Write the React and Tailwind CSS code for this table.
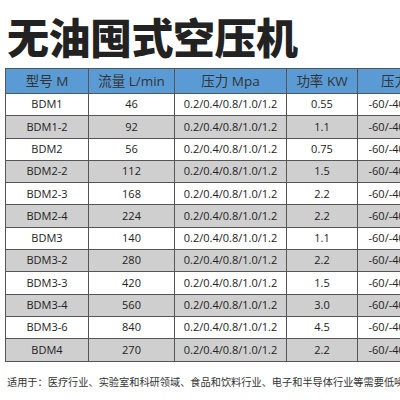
const rows = [
  ['BDM1', '46', '0.55'],
  ['BDM1-2', '92', '1.1'],
  ['BDM2', '56', '0.75'],
  ['BDM2-2', '112', '1.5'],
  ['BDM2-3', '168', '2.2'],
  ['BDM2-4', '224', '2.2'],
  ['BDM3', '140', '1.1'],
  ['BDM3-2', '280', '2.2'],
  ['BDM3-3', '420', '1.5'],
  ['BDM3-4', '560', '3.0'],
  ['BDM3-6', '840', '4.5'],
  ['BDM4', '270', '2.2'],
]

const cell = 'border border-[#555] text-center p-0 whitespace-nowrap overflow-hidden'

export default function App() {
  return (
    <div className="w-[400px] h-[400px] overflow-hidden bg-white text-[#222]" style={{ fontFamily: '"Open Sans", "Noto Sans CJK SC", sans-serif' }}>
      <h1 className="pl-[7px] pt-[10px] h-[68px] text-[42px] leading-[52px] font-black tracking-[-0.5px] text-[#222]" style={{ fontFamily: '"Noto Sans CJK SC", sans-serif' }}>
        无油囤式空压机
      </h1>
      <div className="pl-[5px]">
        <table className="table-fixed border-collapse w-[470px]">
          <colgroup>
            <col className="w-[83px]" />
            <col className="w-[86px]" />
            <col className="w-[112px]" />
            <col className="w-[71px]" />
            <col className="w-[118px]" />
          </colgroup>
          <thead>
            <tr className="h-[25px] bg-[#5b9bd5] text-[13.5px] text-[#333]">
              <th className={`${cell} font-normal`}>型号 M</th>
              <th className={`${cell} font-normal`}>流量 L/min</th>
              <th className={`${cell} font-normal`}>压力 Mpa</th>
              <th className={`${cell} font-normal`}>功率 KW</th>
              <th className={`${cell} font-normal`}>压力露点 ℃</th>
            </tr>
          </thead>
          <tbody className="text-[11px]">
            {rows.map((r, i) => (
              <tr key={r[0]} className={`h-[22.3px] ${i % 2 ? 'bg-[#cfcfcf]' : 'bg-white'}`}>
                <td className={cell}>{r[0]}</td>
                <td className={cell}>{r[1]}</td>
                <td className={cell}>0.2/0.4/0.8/1.0/1.2</td>
                <td className={cell}>{r[2]}</td>
                <td className={cell}>-60/-40/-20/+3/+10</td>
              </tr>
            ))}
          </tbody>
        </table>
      </div>
      <p className="pl-[7px] pt-[13px] text-[10.2px] leading-[14px] whitespace-nowrap text-[#333]" style={{ fontFamily: '"Noto Sans CJK SC", sans-serif' }}>
        适用于：医疗行业、实验室和科研领域、食品和饮料行业、电子和半导体行业等需要低噪音无油压缩空气的场所
      </p>
    </div>
  )
}
